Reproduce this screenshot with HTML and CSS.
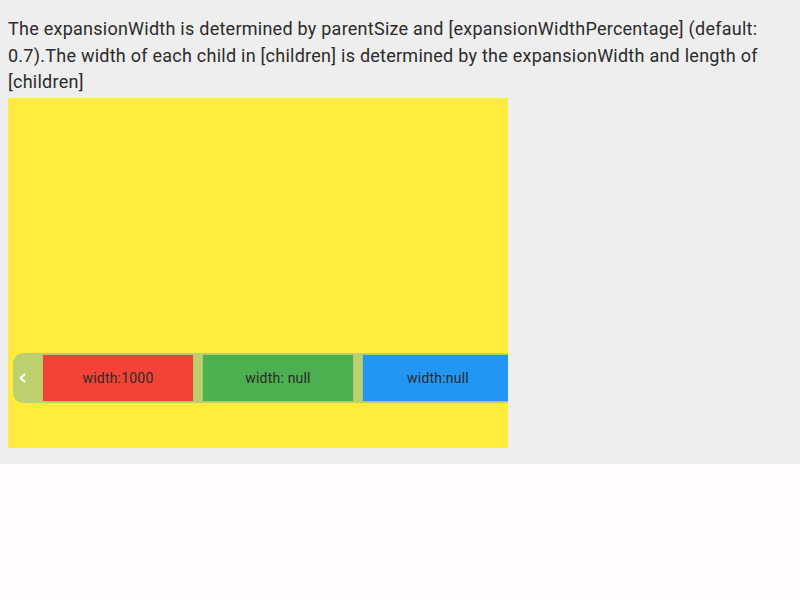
FILE: index.html
```html
<!DOCTYPE html>
<html>
<head>
<meta charset="utf-8">
<link rel="stylesheet" href="styles.css">
</head>
<body>
<div class="screen">
  <p class="desc">The expansionWidth is determined by parentSize and [expansionWidthPercentage] (default: 0.7).The width of each child in [children] is determined by the expansionWidth and length of [children]</p>
  <div class="stage">
    <div class="bar">
      <div class="handle">
        <svg width="10" height="10" viewBox="0 0 10 10"><path d="M6.5 1.5 L2.5 5 L6.5 8.5" fill="none" stroke="#ffffff" stroke-width="2" stroke-linecap="round" stroke-linejoin="round"/></svg>
      </div>
      <div class="child red">width:1000</div>
      <div class="child green">width: null</div>
      <div class="child blue">width:null</div>
    </div>
  </div>
</div>
</body>
</html>
```

FILE: styles.css
```css
html, body {
  margin: 0;
  padding: 0;
  background: #fffbfe;
}
.screen {
  background: #eeeeee;
  padding: 16px 8px 16px 8px;
  height: 464px;
  box-sizing: border-box;
}
.desc {
  margin: 0 0 2px 0;
  font-family: Roboto, "Noto Sans", sans-serif;
  font-size: 18px;
  line-height: 26.67px;
  letter-spacing: 0.25px;
  color: #2b2b2b;
  width: 770px;
}
.stage {
  width: 500px;
  height: 350px;
  background: #ffeb3b;
  display: flex;
  flex-direction: column;
  justify-content: flex-end;
  padding-bottom: 45px;
  box-sizing: border-box;
  overflow: hidden;
}
.bar {
  margin-left: 5px;
  height: 50px;
  background: #bdd070;
  border-radius: 10px 0 0 10px;
  display: flex;
  align-items: center;
  padding: 2px 0;
  box-sizing: border-box;
  gap: 10px;
}
.handle {
  flex: 0 0 30px;
  margin-right: -10px;
  padding-left: 5px;
  box-sizing: border-box;
  display: flex;
  align-items: center;
  height: 100%;
}
.handle svg { display: block; }
.child {
  flex: 0 0 150px;
  height: 46px;
  display: flex;
  align-items: center;
  justify-content: center;
  font-family: Roboto, "Noto Sans", sans-serif;
  font-size: 14px;
  letter-spacing: 0.2px;
  color: #2a2a2a;
  box-shadow: 0 0 1px rgba(0,0,0,0.25);
}
.red { background: #f44336; }
.green { background: #4caf50; }
.blue { background: #2196f3; }
```
